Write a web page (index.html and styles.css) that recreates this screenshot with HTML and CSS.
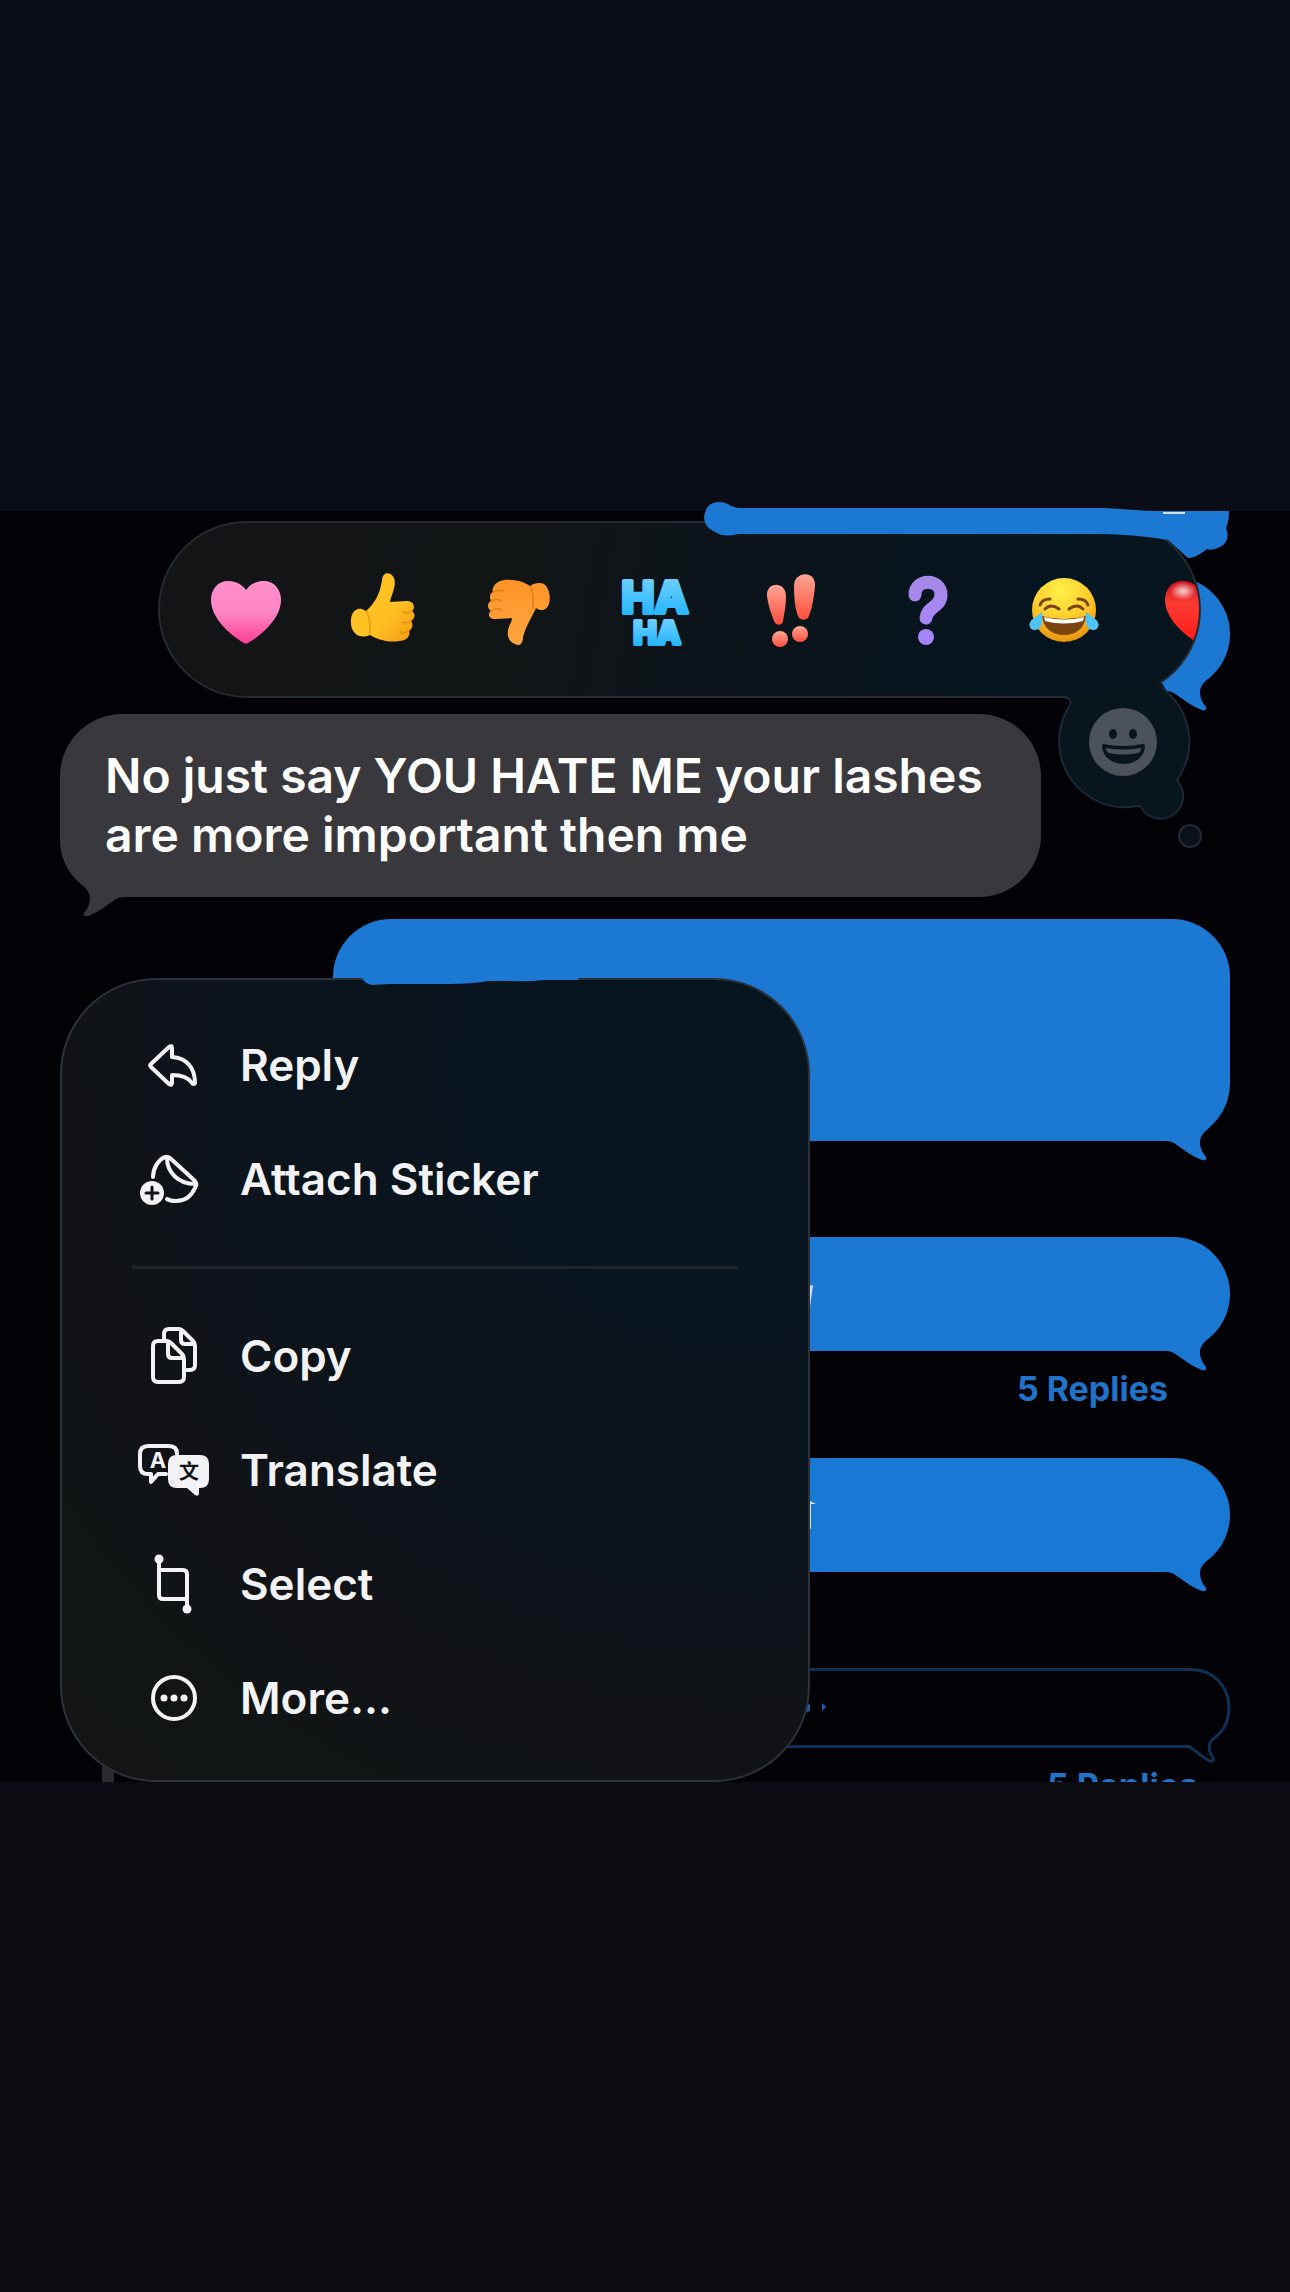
FILE: index.html
```html
<!DOCTYPE html>
<html lang="en">
<head>
  <meta charset="UTF-8">
  <meta name="viewport" content="width=device-width, initial-scale=1.0">
  <title>Messages</title>
  <link rel="stylesheet" href="styles.css">
</head>
<body>
<!-- shared shapes -->
<svg class="defs" width="0" height="0" aria-hidden="true">
  <defs>
    <linearGradient id="pink" x1="0" y1="0" x2="0" y2="1">
      <stop offset="0" stop-color="#ff8fcb"/>
      <stop offset="0.5" stop-color="#ff86c4"/>
      <stop offset="1" stop-color="#ff3f92"/>
    </linearGradient>
    <linearGradient id="red" x1="0" y1="0" x2="0" y2="1">
      <stop offset="0" stop-color="#c9101c"/>
      <stop offset="0.35" stop-color="#fb3b33"/>
      <stop offset="1" stop-color="#ff1a16"/>
    </linearGradient>
    <linearGradient id="yellow" x1="0" y1="0" x2="1" y2="1">
      <stop offset="0" stop-color="#ffc21f"/>
      <stop offset="0.6" stop-color="#ffc024"/>
      <stop offset="1" stop-color="#f59a12"/>
    </linearGradient>
    <linearGradient id="orange" x1="0" y1="0" x2="0" y2="1">
      <stop offset="0" stop-color="#ff9426"/>
      <stop offset="1" stop-color="#ffa640"/>
    </linearGradient>
    <linearGradient id="cyan" x1="0" y1="0" x2="0" y2="1">
      <stop offset="0" stop-color="#7fd4ff"/>
      <stop offset="1" stop-color="#12b0ff"/>
    </linearGradient>
    <linearGradient id="coral" x1="0" y1="0" x2="0" y2="1">
      <stop offset="0" stop-color="#ffa595"/>
      <stop offset="1" stop-color="#ff4f3c"/>
    </linearGradient>
    <linearGradient id="violet" gradientUnits="userSpaceOnUse" x1="0" y1="12" x2="0" y2="80">
      <stop offset="0" stop-color="#a78ae6"/>
      <stop offset="1" stop-color="#a583ff"/>
    </linearGradient>
    <radialGradient id="face" cx="0.45" cy="0.2" r="0.85">
      <stop offset="0" stop-color="#fff04a"/>
      <stop offset="0.5" stop-color="#ffcf2c"/>
      <stop offset="1" stop-color="#e98a0c"/>
    </radialGradient>
    <radialGradient id="gloss">
      <stop offset="0" stop-color="#fff" stop-opacity="0.8"/>
      <stop offset="1" stop-color="#fff" stop-opacity="0"/>
    </radialGradient>
    <symbol id="heart" viewBox="0 0 90 90">
      <path d="M45 25C40 18 33 16 27 16C17 16 10 24 10 35C10 53 29 70 43 78Q45 79 47 78C61 70 80 53 80 35C80 24 73 16 63 16C57 16 50 18 45 25Z"/>
    </symbol>
    <symbol id="tail" viewBox="0 0 80 60">
      <path d="M61 25C54 31 50 35 50 41C50 48 53 52 56 56Q57 60 52 59C41 55 30 46 24 42Q21 40 16 40V20Z"/>
    </symbol>
  </defs>
</svg>

<main class="chat">
  <div class="history">
    <div class="bubble bubble-first"><svg class="tail"><use href="#tail"/></svg></div>
    <div class="bubble bubble-tall"><svg class="tail"><use href="#tail"/></svg></div>
    <div class="bubble bubble-reply">
      <svg class="tail"><use href="#tail"/></svg>
      <svg class="sliver" viewBox="0 0 12 30"><path d="M0 7L5 6L2 28H0Z"/></svg>
    </div>
    <a class="replies" href="#">5 Replies</a>
    <div class="bubble bubble-last">
      <svg class="tail"><use href="#tail"/></svg>
      <svg class="sliver" viewBox="0 0 12 30"><path d="M0 0L8 4H3V29H0Z"/></svg>
    </div>
    <div class="bubble-outline">
      <svg class="sliver sliver-blue" viewBox="0 0 20 20"><path d="M0 4L3 3V9L0 12ZM15 2L19 6L15 10Z"/></svg>
      <svg class="outline-end" width="62" height="96" viewBox="0 0 62 96">
        <path d="M0 1.5H22C44 1.5 60 18 60 40C60 52 56 60 50 66C44 71 40 74 40 79C40 86 44 88 44.500 91Q44 94 41 93C32 89 25 81 20 78.500H0"/>
      </svg>
    </div>
    <a class="replies replies-cut" href="#">5 Replies</a>
  </div>

  <section class="reactions">
    <div class="reaction-list">
      <button class="reaction" aria-label="Heart">
        <svg fill="url(#pink)"><use href="#heart"/></svg>
      </button>
      <button class="reaction" aria-label="Thumbs up">
        <svg viewBox="0 0 90 90">
          <path fill="url(#yellow)" d="M29 46C38 38 43 29 45 15C46 6 54 7 57 13C60 21 54 30 53 37L70 36C77 36 79 43 75 46C79 49 78 54 74 56C77 60 75 64 72 66C74 71 69 76 62 76C50 78 40 74 33 70C24 74 15 70 14 59C13 49 18 42 25 44Z"/>
          <path class="crease" stroke="#e08a10" d="M66 47Q70 49 75 46M65 57Q69 59 74 56M63 67Q67 69 72 66M30 47Q34 58 33 69"/>
        </svg>
      </button>
      <button class="reaction" aria-label="Thumbs down">
        <svg viewBox="0 0 90 90">
          <path fill="url(#orange)" d="M20 21C23 16 30 14 36 15C44 15 50 17 56 21C60 18 66 17 70 19C75 23 77 31 75 39C73 45 67 47 62 43C58 52 52 61 49 72C49 78 46 82 41 79C35 77 33 71 34 65C35 60 38 57 38 53L22 54C15 55 13 49 17 46C13 43 13 38 17 36C15 32 16 28 19 27C18 25 19 23 20 21Z"/>
          <path class="crease" stroke="#d9701a" d="M19 27Q24 24 29 26M17 36Q22 33 27 36M17 46Q22 42 27 45M57 22Q60 32 59 43"/>
        </svg>
      </button>
      <button class="reaction" aria-label="Haha">
        <svg viewBox="0 0 90 90" class="haha">
          <text x="45" y="48" font-size="44" text-anchor="middle">HA</text>
          <text x="47" y="79" font-size="31" text-anchor="middle">HA</text>
        </svg>
      </button>
      <button class="reaction" aria-label="Emphasize">
        <svg viewBox="0 0 90 90" fill="url(#coral)">
          <path d="M21 31C20 16 40 16 40 31C40 42 38 50 37 56C36 61 30 61 28 56C25 48 22 40 21 31Z"/>
          <path d="M48 21C48 6 70 5 69 21C68 33 66 43 63 51C61 56 54 56 52 51C49 43 48 33 48 21Z"/>
          <circle cx="34" cy="74" r="8"/>
          <circle cx="54" cy="69" r="8"/>
        </svg>
      </button>
      <button class="reaction" aria-label="Question">
        <svg viewBox="0 0 90 90">
          <path d="M32 30C32 13 58 13 58 30C58 42 44 42 43 53" fill="none" stroke="url(#violet)" stroke-width="13" stroke-linecap="round"/>
          <circle cx="43" cy="72" r="8" fill="url(#violet)"/>
        </svg>
      </button>
      <button class="reaction" aria-label="Tears of joy">
        <svg viewBox="0 0 90 90">
          <circle cx="45" cy="45" r="32" fill="url(#face)"/>
          <path d="M21 40Q23 34 31 34M69 40Q67 34 59 34" class="brow"/>
          <path d="M26 44Q32 38 40 44M50 44Q58 38 64 44" class="brow"/>
          <path d="M23 51Q45 57 67 51C66 63 57 70 45 70C33 70 24 63 23 51Z" fill="#7a4510"/>
          <path d="M25 52Q45 57 65 52L64 56Q45 61 26 56Z" fill="#fff"/>
          <path d="M23 47C24 56 23 65 16 65C9 65 9 57 14 54Z" fill="#4fc3f5"/>
          <path d="M67 47C66 56 67 65 74 65C81 65 81 57 76 54Z" fill="#4fc3f5"/>
        </svg>
      </button>
      <button class="reaction" aria-label="Red heart">
        <svg viewBox="0 0 90 90" fill="url(#red)">
          <use href="#heart"/>
          <ellipse cx="28" cy="26" rx="13" ry="9" fill="url(#gloss)"/>
        </svg>
      </button>
    </div>
    <!-- thought bubble with the emoji picker -->
    <svg class="thought" width="160" height="170" viewBox="0 0 160 170">
      <path fill="#09151d" d="M10 15C20 15 24 20 17 29A66 66 0 0 0 88 126Q92 125 93 129A22 22 0 0 0 129 102Q126 99 129 96A66 66 0 0 0 118 13L112 3L100 5Z"/>
      <path fill="none" stroke="#1d2834" stroke-width="2" d="M10 17C20 17 24 21 17 30A66 66 0 0 0 88 126Q91 126 92 129A22 22 0 0 0 129 103Q126 100 129 97A66 66 0 0 0 118 13Q115 10 112 8"/>
      <circle cx="140" cy="156" r="11" fill="#0a1118" stroke="#222a35" stroke-width="2"/>
      <circle cx="73" cy="62" r="34" fill="#4b5259"/>
      <ellipse cx="63" cy="54" rx="4" ry="5" fill="#09151d"/>
      <ellipse cx="83" cy="54" rx="4" ry="5" fill="#09151d"/>
      <path fill="#09151d" d="M53 64Q73 68 93 64Q95 64 95 67C94 77 85 84 74 84C62 84 53 77 52 67Q52 64 53 64Z"/>
      <path fill="#4b5259" d="M56 68Q73 71 91 68Q91 72 88 73Q73 76 59 73Q56 72 56 68Z"/>
    </svg>
    <svg class="stroke-top" width="530" height="60" viewBox="0 0 530 60">
      <path d="M19 1Q26 1 31 5L38 7H405L450 10H529Q529 20 526 27Q531 40 520 46Q512 50 507 48Q496 57 488 57L468 39Q440 34 405 33H38Q24 37 15 31Q4 26 4 16Q6 1 19 1Z"/>
      <path class="stroke-mark" d="M463 11H485V13H463Z"/>
    </svg>
  </section>

  <p class="message">No just say YOU HATE ME your lashes are more important then me
    <svg class="tail tail-left"><use href="#tail"/></svg>
  </p>

  <nav class="menu">
    <button class="menu-item">
      <svg class="icon" viewBox="0 0 72 60"><path d="M15 29L33 12Q36 10 36 13V22C51 23 59 33 59 48Q58 50 56 48C52 42 46 40 36 40V48Q36 51 33 49L15 32Q13.500 30.500 15 29Z"/></svg>
      Reply
    </button>
    <button class="menu-item">
      <svg class="icon" viewBox="0 0 72 60">
        <path d="M17 28C17 19 23 10 29 8Q31 7 34 9L58 31Q62 35 59 39C55 48 49 52 40 52Q34 52 31 50M31 9C31 23 42 35 59 35"/>
        <circle class="solid" cx="16" cy="44" r="12"/>
        <path class="cut" d="M16 38V50M10 44H22"/>
      </svg>
      Attach Sticker
    </button>
    <hr class="divider">
    <button class="menu-item">
      <svg class="icon" viewBox="0 0 72 60">
        <path d="M28 13V8Q28 3 33 3H43Q45 3 47 5L57 15Q59 17 59 20V39Q59 44 54 44H51M45 4V14Q45 18 49 18H58"/>
        <path d="M22 15H31Q33 15 35 17L46 28Q48 30 48 33V51Q48 56 43 56H22Q17 56 17 51V20Q17 15 22 15ZM32 16V28Q32 32 36 32H47"/>
      </svg>
      Copy
    </button>
    <button class="menu-item">
      <svg class="icon" viewBox="0 0 72 60">
        <path d="M30 34H22L15 42V34H12Q4 34 4 26V14Q4 6 12 6H33Q41 6 41 14"/>
        <text class="glyph" x="22" y="28" font-size="22">A</text>
        <path class="solid" d="M41 15H64Q73 15 73 24V39Q73 48 64 48H63V54Q62 57 59 55L51 48H41Q32 48 32 39V24Q32 15 41 15Z"/>
        <text class="glyph glyph-cjk" x="53" y="39" font-size="20">文</text>
      </svg>
      Translate
    </button>
    <button class="menu-item">
      <svg class="icon" viewBox="0 0 72 60">
        <path d="M23 5V41Q23 45 27 45H51M23 16H47Q51 16 51 20V55"/>
        <circle class="solid" cx="23" cy="5" r="4.500"/>
        <circle class="solid" cx="51" cy="55" r="4.500"/>
      </svg>
      Select
    </button>
    <button class="menu-item">
      <svg class="icon" viewBox="0 0 72 60">
        <circle cx="38" cy="30" r="21"/>
        <circle class="solid" cx="28" cy="30" r="3.500"/>
        <circle class="solid" cx="38" cy="30" r="3.500"/>
        <circle class="solid" cx="48" cy="30" r="3.500"/>
      </svg>
      More...
    </button>
    <svg class="stroke-menu" width="220" height="16" viewBox="0 0 220 16">
      <path d="M2 0H220V10H186Q170 12 150 11L130 11Q115 14 90 14H32L14 15Q3 13 2 0Z"/>
    </svg>
  </nav>
</main>
</body>
</html>
```

FILE: styles.css
```css
* {
    box-sizing: border-box;
}

body {
    margin: 0;
    min-height: 100vh;
    padding: 511px 0;
    background: linear-gradient(#0a0d15, #0a0d14 50%, #0b0c11 50%);
    font-family: Inter, "Noto Sans CJK SC", sans-serif;
    color: #fff;
}

button {
    border: 0;
    padding: 0;
    background: none;
    font: inherit;
    color: inherit;
    cursor: pointer;
}

.defs {
    position: absolute;
}

.chat {
    position: relative;
    display: flow-root;
    background: #020106;
}

/* messages behind the overlay */
.history {
    position: absolute;
    inset: 0;
    overflow: hidden;
    display: flex;
    flex-direction: column;
    align-items: flex-end;
    padding: 66px 60px 0;
}

/* grey thread line peeking out under the menu */
.history::before {
    content: "";
    position: absolute;
    left: 102px;
    bottom: 0;
    width: 12px;
    height: 16px;
    background: #2b2b2f;
}

.bubble {
    position: relative;
    flex: none;
    width: 60%;
    height: 114px;
    border-radius: 57px;
    background: #1b79d4;
    fill: #1b79d4;
}

.bubble-first {
    width: 20%;
}

.bubble-tall {
    width: 897px;
    max-width: 100%;
    height: 222px;
    margin-top: 228px;
    border-radius: 58px;
}

.bubble-reply {
    margin-top: 96px;
}

.bubble-last {
    margin-top: 49px;
    background: #1879d5;
    fill: #1879d5;
}

.tail {
    position: absolute;
    right: 0;
    bottom: -20px;
    width: 80px;
    height: 60px;
}

.tail-left {
    right: auto;
    left: 0;
    transform: scaleX(-1);
}

/* ends of letters showing beside the menu */
.sliver {
    position: absolute;
    right: 410px;
    top: 42px;
    width: 12px;
    height: 30px;
    fill: #d5e0ee;
}

.sliver-blue {
    right: 342px;
    top: 30px;
    width: 20px;
    height: 20px;
    fill: #1f5fae;
}

.replies {
    flex: none;
    margin: 18px 62px 0 0;
    font-size: 34px;
    line-height: 40px;
    font-weight: 700;
    color: #1f74c9;
    text-decoration: none;
}

.replies-cut {
    margin-right: 32px;
}

.bubble-outline {
    position: relative;
    flex: none;
    width: 54%;
    height: 80px;
    margin: 96px 61px 0 0;
    border: solid #0e3155;
    border-width: 3px 0 3px 3px;
    border-radius: 40px 0 0 40px;
}

.outline-end {
    position: absolute;
    left: 100%;
    top: -3px;
    fill: none;
    stroke: #0e3155;
    stroke-width: 3px;
}

/* reaction bar */
.reactions {
    position: relative;
    height: 177px;
    margin: 10px 89px 0 158px;
    border: 2px solid #262a31;
    border-radius: 89px;
    background: linear-gradient(100deg, #131416, #111516 35%, #0b141b 60%, #051520 85%, #09151d);
}

.reaction-list {
    display: flex;
    height: 100%;
    padding-left: 18px;
    overflow: hidden;
    border-radius: 87px;
}

.reaction {
    flex: 0 0 13.350%;
    display: flex;
    align-items: center;
    justify-content: center;
}

.reaction svg {
    width: 90px;
    height: 90px;
    flex: none;
}

.crease {
    fill: none;
    stroke-width: 2px;
    stroke-linecap: round;
    opacity: 0.6;
}

.brow {
    fill: none;
    stroke: #7a4510;
    stroke-width: 3px;
    stroke-linecap: round;
}

.haha {
    font-weight: 800;
    fill: url(#cyan);
    stroke: url(#cyan);
    stroke-width: 4px;
    stroke-linejoin: round;
}

.thought {
    position: absolute;
    right: -11px;
    top: 157px;
}

.stroke-top {
    position: absolute;
    right: -31px;
    top: -22px;
    fill: #1c79d3;
}

.stroke-mark {
    fill: #d5e0ee;
}

/* selected message */
.message {
    position: relative;
    width: fit-content;
    max-width: 981px;
    margin: 16px 60px 0;
    padding: 32px 45px 33px;
    border-radius: 62px 62px 62px 57px;
    background: #39383d;
    fill: #39383d;
    font-size: 48px;
    line-height: 59px;
    font-weight: 600;
}

/* context menu */
.menu {
    position: relative;
    max-width: 750px;
    margin: 81px 60px 0;
    padding: 28px 0 25px;
    border: 2px solid #2c313a;
    border-radius: 96px;
    background: radial-gradient(circle at 90% 10%, #06151f, #0a141d 40%, #111317 68%, #111515 85%, #131416);
}

.menu-item {
    display: flex;
    align-items: center;
    gap: 32px;
    width: 100%;
    height: 114px;
    padding-left: 74px;
    font-size: 44px;
    font-weight: 600;
    color: #f3f3f5;
    text-align: left;
}

.icon {
    width: 72px;
    height: 60px;
    overflow: visible;
    fill: none;
    stroke: #f3f3f5;
    stroke-width: 4px;
    stroke-linecap: round;
    stroke-linejoin: round;
}

.icon .solid {
    fill: #f3f3f5;
    stroke: none;
}

.icon .cut {
    stroke: #101216;
    stroke-width: 3px;
}

.icon .glyph {
    fill: #f3f3f5;
    stroke: none;
    font-weight: 700;
    text-anchor: middle;
}

.icon .glyph-cjk {
    fill: #101216;
    font-family: "Noto Sans CJK SC", sans-serif;
}

.divider {
    height: 3px;
    margin: 30px 70px;
    border: 0;
    background: #212429;
}

/* brush mark running over the top edge of the menu */
.stroke-menu {
    position: absolute;
    left: 296px;
    top: -10px;
    fill: #1c79d3;
}
```
